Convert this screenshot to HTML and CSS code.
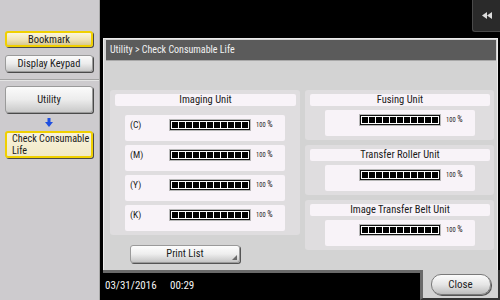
FILE: index.html
```html
<!DOCTYPE html>
<html>
<head>
<meta charset="utf-8">
<link rel="stylesheet" href="styles.css">
</head>
<body>
<div class="screen">
  <aside class="sidebar">
    <div class="sbtn sbtn-yellow sbtn-bookmark">Bookmark</div>
    <div class="sbtn sbtn-gray sbtn-keypad">Display Keypad</div>
    <div class="divider"></div>
    <div class="sbtn sbtn-gray sbtn-utility">Utility</div>
    <div class="arrow">
      <svg width="8" height="9" viewBox="0 0 8 9"><rect x="2.5" y="0" width="3" height="4" fill="#1f4fe0"/><polygon points="0,4 8,4 4,9" fill="#1f4fe0"/></svg>
    </div>
    <div class="sbtn sbtn-yellow sbtn-check"><span class="two">Check Consumable<br>Life</span></div>
  </aside>
  <main class="main">
    <div class="topbar">
      <div class="backbtn">
        <svg width="10" height="7" viewBox="0 0 10 7"><polygon points="0,3.5 5,0 5,7" fill="#dcdcdc"/><polygon points="5,3.5 10,0 10,7" fill="#dcdcdc"/></svg>
      </div>
    </div>
    <section class="panel">
      <div class="titlebar">Utility &gt; Check Consumable Life</div>
      <div class="body">
        <div class="col-left">
          <div class="group group-imaging">
            <div class="ghead">Imaging Unit</div>
            <div class="rows">
              <div class="row"><span class="lbl">(C)</span><div class="bar"><i></i><i></i><i></i><i></i><i></i><i></i><i></i><i></i><i></i><i></i><i></i></div><span class="pct">100 <b>%</b></span></div>
              <div class="row"><span class="lbl">(M)</span><div class="bar"><i></i><i></i><i></i><i></i><i></i><i></i><i></i><i></i><i></i><i></i><i></i></div><span class="pct">100 <b>%</b></span></div>
              <div class="row"><span class="lbl">(Y)</span><div class="bar"><i></i><i></i><i></i><i></i><i></i><i></i><i></i><i></i><i></i><i></i><i></i></div><span class="pct">100 <b>%</b></span></div>
              <div class="row"><span class="lbl">(K)</span><div class="bar"><i></i><i></i><i></i><i></i><i></i><i></i><i></i><i></i><i></i><i></i><i></i></div><span class="pct">100 <b>%</b></span></div>
            </div>
          </div>
          <div class="printbtn">Print List<span class="corner"></span></div>
        </div>
        <div class="col-right">
          <div class="group group-small">
            <div class="ghead">Fusing Unit</div>
            <div class="row row-wide"><div class="bar"><i></i><i></i><i></i><i></i><i></i><i></i><i></i><i></i><i></i><i></i><i></i></div><span class="pct">100 <b>%</b></span></div>
          </div>
          <div class="group group-small">
            <div class="ghead">Transfer Roller Unit</div>
            <div class="row row-wide"><div class="bar"><i></i><i></i><i></i><i></i><i></i><i></i><i></i><i></i><i></i><i></i><i></i></div><span class="pct">100 <b>%</b></span></div>
          </div>
          <div class="group group-small">
            <div class="ghead">Image Transfer Belt Unit</div>
            <div class="row row-wide"><div class="bar"><i></i><i></i><i></i><i></i><i></i><i></i><i></i><i></i><i></i><i></i><i></i></div><span class="pct">100 <b>%</b></span></div>
          </div>
        </div>
      </div>
    </section>
    <div class="bottom">
      <div class="status"><span class="date">03/31/2016</span><span class="time">00:29</span></div>
      <div class="closetab"><div class="closebtn">Close</div></div>
    </div>
  </main>
</div>
</body>
</html>
```
FILE: styles.css
```css
* { box-sizing: border-box; }
html, body { margin: 0; padding: 0; }
body {
  width: 500px;
  height: 300px;
  overflow: hidden;
  background: #000;
  font-family: "Roboto Condensed", Roboto, "Liberation Sans", sans-serif;
  font-stretch: condensed;
  color: #1a1a1a;
}
.screen {
  display: grid;
  grid-template-columns: 100px 400px;
  height: 300px;
}
.sidebar {
  background: #cdcbce;
  border-right: 1px solid #a8a8a8;
  display: flex;
  flex-direction: column;
  padding-top: 31px;
}
.sbtn {
  margin-left: 5px;
  width: 88px;
  font-size: 10.5px;
  border-radius: 3px;
  box-shadow: 1px 1px 0 #4a4a4a;
  display: flex;
  align-items: center;
  justify-content: center;
  text-align: center;
  white-space: nowrap;
}
.sbtn-yellow {
  border: 2px solid #f0d000;
  background: linear-gradient(#fbf5dc, #efe4b8 55%, #d9c98e);
}
.sbtn-gray {
  border: 1px solid #9a9a9a;
  background: linear-gradient(#fbfbfb, #ececec 50%, #c9c9c9);
}
.sbtn-bookmark { height: 16px; }
.sbtn-keypad { height: 17px; margin-top: 8px; }
.divider {
  margin-top: 7px;
  height: 2px;
  border-top: 1px solid #a3a3a3;
  border-bottom: 1px solid #e4e4e4;
}
.sbtn-utility { height: 27px; margin-top: 5px; }
.arrow {
  margin-top: 5px;
  height: 9px;
  display: flex;
  justify-content: center;
  padding-right: 2px;
}
.arrow svg { display: block; }
.sbtn-check {
  height: 27px;
  margin-top: 4px;
  justify-content: flex-start;
  text-align: left;
  padding-left: 5px;
  font-size: 10.2px;
  background: linear-gradient(#f8f2dc, #f1e9c6);
}
.two {
  display: block;
  line-height: 12px;
}

.main {
  display: grid;
  grid-template-rows: 38px 232px 30px;
  background: #000;
}
.topbar {
  display: flex;
  justify-content: flex-end;
}
.backbtn {
  width: 28px;
  height: 32px;
  background: #2a2a2a;
  border-left: 1px solid #4a4a4a;
  border-bottom: 1px solid #4a4a4a;
  border-bottom-left-radius: 3px;
  display: flex;
  align-items: center;
  justify-content: center;
}
.backbtn svg { display: block; }

.panel {
  margin-left: 3px;
  margin-right: 2px;
  border-top: 1px solid #ececec;
  border-left: 1px solid #ececec;
  border-right: 1px solid #ececec;
  background: #d3d3d3;
  padding: 1px 1px 0 2px;
  display: flex;
  flex-direction: column;
}
.titlebar {
  height: 21px;
  background: #5b5b5b;
  border-bottom: 1px solid #a9a9a9;
  color: #f2f2f2;
  font-size: 10px;
  padding-left: 4px;
  line-height: 20px;
}
.body {
  flex: 1;
  display: flex;
  gap: 5px;
  padding: 29px 2px 0 4px;
  align-items: flex-start;
}
.col-left {
  width: 190px;
  display: flex;
  flex-direction: column;
}
.col-right {
  width: 189px;
  display: flex;
  flex-direction: column;
  gap: 5px;
}
.group {
  background: #dfdddf;
  border-radius: 3px;
  padding: 4px 4px 4px 5px;
}
.ghead {
  height: 12px;
  background: #f8f3f8;
  border-radius: 2px;
  font-size: 10.5px;
  line-height: 12px;
  text-align: center;
  color: #1a1a1a;
}
.rows {
  margin-top: 9px;
  padding: 0 11px 0 10px;
  display: flex;
  flex-direction: column;
  gap: 4px;
}
.row {
  height: 26px;
  background: #f8f3f8;
  border-radius: 2px;
  display: flex;
  align-items: flex-start;
  padding-top: 5px;
  padding-left: 5px;
}
.group-small { height: 50px; padding-bottom: 0; }
.row-wide {
  margin: 4px 15px 0 15px;
  padding-left: 35px;
}
.lbl {
  width: 40px;
  font-size: 9.5px;
  line-height: 10px;
}
.bar {
  width: 80px;
  height: 10px;
  border: 1px solid #111;
  box-shadow: 0 0 0 1px #b8b8b8;
  background: #fff;
  padding: 1px;
  display: flex;
  gap: 1px;
}
.bar i {
  flex: 1;
  background: #000;
}
.pct {
  margin-left: 6px;
  font-size: 6.5px;
  line-height: 8px;
  color: #222;
}
.pct b {
  font-weight: normal;
  font-size: 8.5px;
}
.printbtn {
  position: relative;
  margin-top: 10px;
  margin-left: 20px;
  width: 110px;
  height: 18px;
  border: 1px solid #9a9a9a;
  border-radius: 3px;
  background: linear-gradient(#fdfdfd, #eeeeee 50%, #c6c6c6);
  box-shadow: 1px 1px 0 #555;
  font-size: 10.5px;
  line-height: 16px;
  text-align: center;
}
.corner {
  position: absolute;
  right: 2px;
  bottom: 2px;
  width: 0;
  height: 0;
  border-left: 5px solid transparent;
  border-bottom: 5px solid #6a6a6a;
}

.bottom {
  display: flex;
}
.status {
  flex: 1;
  margin-left: 3px;
  border-top: 3px solid #6a6a6a;
  background: #000;
  color: #f4f4f4;
  font-size: 11px;
  display: flex;
  align-items: center;
  padding-left: 2px;
  padding-bottom: 2px;
}
.date { width: 65px; }
.closetab {
  width: 80px;
  background: #d3d3d3;
  border-left: 3px solid #6a6a6a;
  border-right: 2px solid #333;
  border-bottom: 2px solid #333;
  display: flex;
  align-items: center;
  justify-content: center;
}
.closebtn {
  width: 60px;
  height: 21px;
  border: 1px solid #7a7a7a;
  border-radius: 10px;
  background: linear-gradient(#fcfcfc, #e6e6e6 50%, #bdbdbd);
  box-shadow: 1px 1px 0 #555;
  font-size: 11px;
  line-height: 19px;
  text-align: center;
  color: #222;
}
```
